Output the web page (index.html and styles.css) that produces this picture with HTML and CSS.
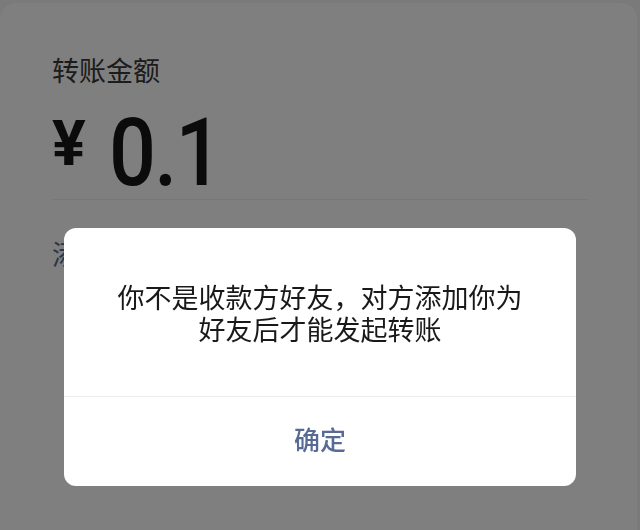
FILE: index.html
```html
<!DOCTYPE html>
<html lang="zh-CN">
<head>
  <meta charset="UTF-8">
  <title>转账</title>
  <link rel="stylesheet" href="styles.css">
</head>
<body>

  <div class="page">
    <div class="card">
      <div class="title">转账金额</div>
      <div class="amount">
        <span class="yen">¥</span>
        <span class="num">0.1</span>
      </div>
      <div class="remark">添加转账说明</div>
    </div>
  </div>

  <div class="mask"></div>

  <div class="dialog">
    <div class="dialog-msg">
      <p>你不是收款方好友，对方添加你为</p>
      <p>好友后才能发起转账</p>
    </div>
    <div class="dialog-btn">确定</div>
  </div>

</body>
</html>
```

FILE: styles.css
```css
body {
  margin: 0;
  background: #f4f4f4;
  font-family: "Noto Sans CJK SC", "Noto Sans", sans-serif;
}

.page {
  padding-top: 3px;
  height: 527px;
}

.card {
  background: #fff;
  border-radius: 16px 16px 0 0;
  margin-right: 3px;
  padding: 49px 49px 0 52px;
  height: 478px;
}

.title {
  font-size: 27px;
  line-height: 36px;
  color: #383838;
}

.amount {
  display: flex;
  align-items: flex-start;
  margin-top: 18px;
  height: 93px;
  border-bottom: 1px solid #eeeeee;
  font-family: Roboto, "Liberation Sans", sans-serif;
  color: #161616;
}

.yen {
  font-size: 63px;
  line-height: 63px;
  font-weight: bold;
  margin-top: 6px;
  margin-right: 23px;
}

.num {
  display: inline-block;
  font-size: 94px;
  line-height: 94px;
  font-weight: 500;
  letter-spacing: -2px;
  transform: scaleX(0.88);
  transform-origin: left center;
}

.remark {
  margin-top: 36px;
  font-size: 27px;
  line-height: 36px;
  color: #576b95;
}

.mask {
  position: fixed;
  top: 0;
  left: 0;
  right: 0;
  bottom: 0;
  background: rgba(0, 0, 0, 0.5);
}

.dialog {
  position: fixed;
  left: 64px;
  top: 228px;
  width: 512px;
  background: #fff;
  border-radius: 12px;
  overflow: hidden;
}

.dialog-msg {
  padding: 53px 30px 51px;
  font-size: 27px;
  line-height: 32px;
  text-align: center;
  color: #191919;
  border-bottom: 1px solid #ececec;
}

.dialog-msg p {
  margin: 0;
}

.dialog-btn {
  height: 84px;
  line-height: 84px;
  padding-bottom: 5px;
  text-align: center;
  font-size: 26px;
  font-weight: 500;
  color: #576b95;
}
```
